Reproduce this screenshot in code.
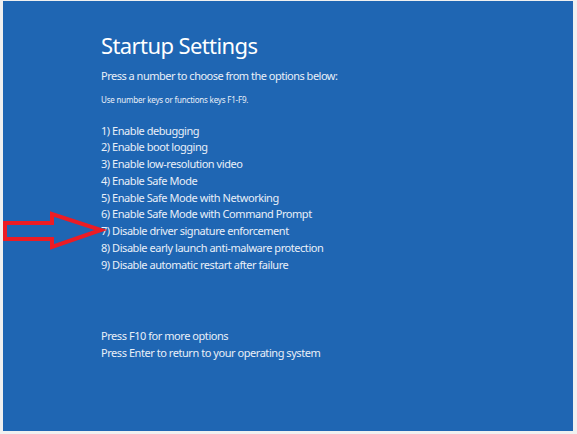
const options = [
  '1) Enable debugging',
  '2) Enable boot logging',
  '3) Enable low-resolution video',
  '4) Enable Safe Mode',
  '5) Enable Safe Mode with Networking',
  '6) Enable Safe Mode with Command Prompt',
  '7) Disable driver signature enforcement',
  '8) Disable early launch anti-malware protection',
  '9) Disable automatic restart after failure',
]

function RedArrow() {
  return (
    <svg
      className="absolute left-0 top-[208px]"
      width="108"
      height="46"
      viewBox="0 0 108 46"
    >
      <path
        d="M5 15 H52 V6 L101 22 L52 39 V31 H5 Z"
        fill="none"
        stroke="#ec1c24"
        strokeWidth="4"
        strokeLinejoin="miter"
      />
    </svg>
  )
}

export default function App() {
  return (
    <div className="relative h-[434px] w-[577px] overflow-hidden bg-[#f0f0f0] pl-[3px] pt-[1px] font-['Noto_Sans',sans-serif]">
      <div className="h-[430px] w-[570px] bg-[#1f66b3] pl-[98px] pt-[30px] text-[#e9eff8]">
        <h1 className="text-[22px] leading-[28px] font-normal tracking-[-0.6px] text-white">
          Startup Settings
        </h1>
        <p className="mt-[9px] text-[11px] leading-[16px] tracking-[-0.5px]">
          Press a number to choose from the options below:
        </p>
        <p className="mt-[10px] text-[8px] leading-[12px] tracking-[-0.2px]">
          Use number keys or functions keys F1-F9.
        </p>
        <ul className="mt-[16.6px] text-[11px] leading-[16.75px] tracking-[-0.45px]">
          {options.map((option) => (
            <li key={option}>{option}</li>
          ))}
        </ul>
        <div className="mt-[55px] text-[11px] leading-[16.75px] tracking-[-0.45px]">
          <p>Press F10 for more options</p>
          <p>Press Enter to return to your operating system</p>
        </div>
      </div>
      <RedArrow />
    </div>
  )
}
